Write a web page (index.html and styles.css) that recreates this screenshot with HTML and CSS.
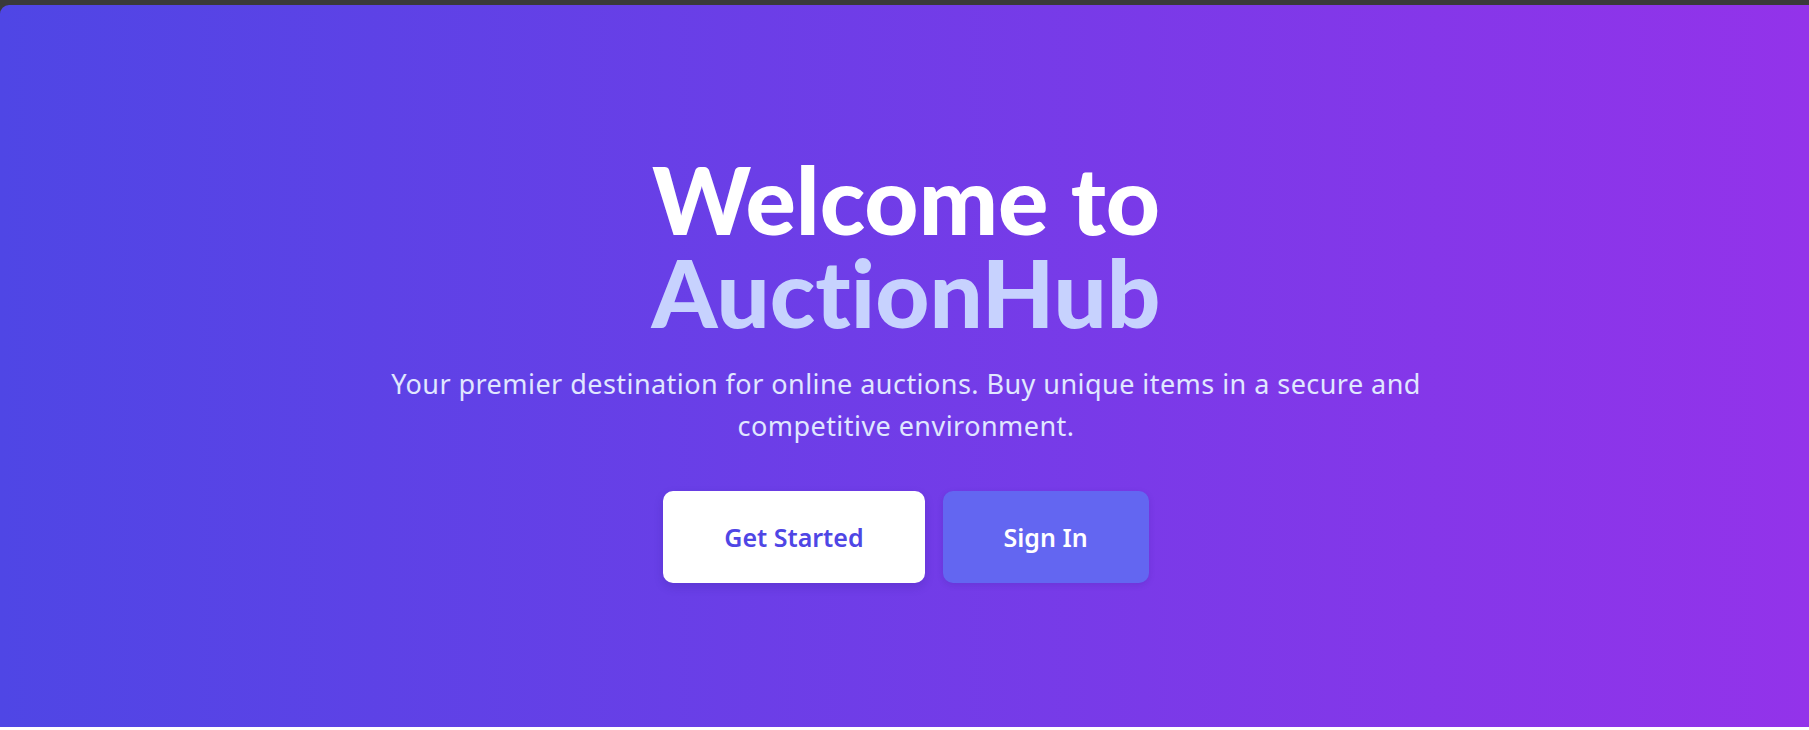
FILE: index.html
```html
<!DOCTYPE html>
<html lang="en">
<head>
<meta charset="utf-8">
<title>AuctionHub</title>
<link rel="stylesheet" href="styles.css">
</head>
<body>
<div class="frame">
  <section class="hero">
    <div class="hero-inner">
      <h1 class="hero-title">Welcome to<br><span class="hero-brand">AuctionHub</span></h1>
      <p class="hero-text">Your premier destination for online auctions. Buy unique items in a secure and competitive environment.</p>
      <div class="hero-actions">
        <a class="btn btn-primary" href="#">Get Started</a>
        <a class="btn btn-secondary" href="#">Sign In</a>
      </div>
    </div>
  </section>
</div>
</body>
</html>
```
FILE: styles.css
```css
* { box-sizing: border-box; }
html, body { margin: 0; padding: 0; background: #ffffff; }
body { font-family: "Noto Sans", "Open Sans", sans-serif; }

.frame {
  background: #3a3a3a;
  padding-top: 5px;
}

.hero {
  height: 722px;
  padding: 2px 0 0 3px;
  border-top-left-radius: 9px;
  background: linear-gradient(to right, #4f46e5, #9333ea);
  display: flex;
  align-items: center;
  justify-content: center;
}

.hero-inner {
  display: flex;
  flex-direction: column;
  align-items: center;
  text-align: center;
}

.hero-title {
  margin: 0 0 0;
  padding-top: 2px;
  font-family: "Lato", "Noto Sans", sans-serif;
  font-weight: 900;
  font-size: 94px;
  line-height: 92.6px;
  color: #ffffff;
  font-variant-ligatures: none;
}

.hero-brand { color: #c7d2fe; }

.hero-text {
  margin: 24px 0 0;
  max-width: 1070px;
  font-size: 27px;
  line-height: 42px;
  letter-spacing: 0.45px;
  color: #e0e7ff;
}

.hero-actions {
  margin-top: 44px;
  display: flex;
  gap: 18px;
}

.btn {
  display: inline-block;
  height: 92px;
  padding: 28px 61px;
  border-radius: 10px;
  font-size: 25px;
  font-weight: 600;
  line-height: 36px;
  text-decoration: none;
}

.btn-primary {
  background: #ffffff;
  color: #4f46e5;
  box-shadow: 0 4px 10px rgba(40, 20, 120, 0.18);
}

.btn-secondary {
  background: #6366f1;
  color: #ffffff;
  box-shadow: 0 2px 6px rgba(40, 20, 120, 0.15);
}
```
